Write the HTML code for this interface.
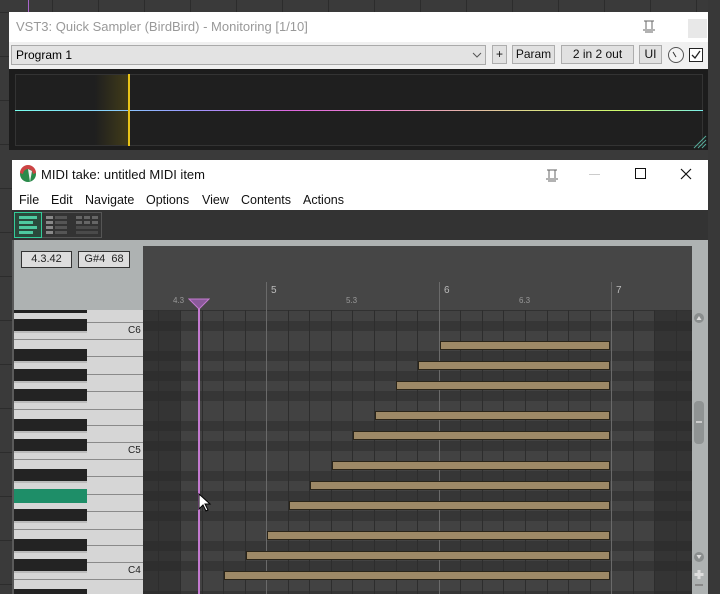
<!DOCTYPE html>
<html style="overflow:hidden"><head><style>
*{margin:0;padding:0;box-sizing:border-box}
html,body{width:720px;height:594px;overflow:hidden}
body{background:#3a3a3a;font-family:"Liberation Sans",sans-serif;position:relative}
.a{position:absolute}
.btn{position:absolute;top:45px;height:19px;background:#e1e1e1;border:1px solid #adadad;font-size:12px;text-align:center;line-height:17px;color:#111}
.t{font-size:12.5px;color:#111;position:absolute}
</style></head><body>
<div id="bg"></div>
<div class="a" style="left:9px;top:12px;width:699px;height:138px;background:#f0f0f0"></div>
<div class="a" style="left:9px;top:12px;width:699px;height:30px;background:#fff"></div>
<div class="t" style="left:16px;top:19px;color:#999;font-size:13px">VST3: Quick Sampler (BirdBird) - Monitoring [1/10]</div>
<svg class="a" style="left:641px;top:18px" width="16" height="16"><path d="M3 3h10M5 3v8M11 3v8M2 12h12M4 14h8" stroke="#666" fill="none"/></svg>
<div class="a" style="left:688px;top:19px;width:19px;height:19px;background:#e8e8e8"></div>
<div class="a" style="left:11px;top:45px;width:475px;height:20px;background:#e3e3e3;border:1px solid #aaa;font-size:12px;line-height:18px;padding-left:4px">Program 1</div>
<svg class="a" style="left:472px;top:51px" width="10" height="8"><path d="M1 2l4 4 4-4" stroke="#555" fill="none"/></svg>
<div class="btn" style="left:492px;width:15px">+</div>
<div class="btn" style="left:512px;width:43px">Param</div>
<div class="btn" style="left:561px;width:73px">2 in 2 out</div>
<div class="btn" style="left:639px;width:23px">UI</div>
<svg class="a" style="left:667px;top:45px" width="38" height="20"><circle cx="9" cy="10" r="7.5" stroke="#555" fill="#f4f4f4"/><path d="M6 7l3 5" stroke="#333"/><rect x="22.5" y="3.5" width="13" height="13" stroke="#222" fill="#fff"/><path d="M25 10l3 3 5-7" stroke="#222" fill="none" stroke-width="1.3"/></svg>
<div class="a" style="left:9px;top:69px;width:699px;height:81px;background:#1c1c1c"></div>
<div class="a" style="left:15px;top:74px;width:688px;height:72px;border:1px solid #333;background:#1f1f1f"></div>
<div class="a" style="left:95px;top:75px;width:34px;height:70px;background:linear-gradient(90deg,rgba(60,55,20,0),rgba(90,80,20,.6))"></div>
<div class="a" style="left:15px;top:110px;width:688px;height:1px;background:linear-gradient(90deg,#7fe,#8cf 15%,#99f 25%,#d6d 40%,#e8c 55%,#dd8 75%,#cf6 90%,#7ee)"></div>
<div class="a" style="left:128px;top:74px;width:2px;height:72px;background:#e8c318"></div>
<svg class="a" style="left:692px;top:132px" width="16" height="18"><path d="M2 16L14 4M6 16L14 8M10 16L14 12" stroke="#5a9"/></svg>
<div class="a" style="left:12px;top:160px;width:696px;height:434px;background:#aeb2b2"></div>
<div class="a" style="left:12px;top:160px;width:696px;height:50px;background:#fff"></div>
<svg class="a" style="left:19px;top:165px" width="18" height="18"><circle cx="9" cy="9" r="8" fill="#2a8a4a"/><path d="M1 8a8 8 0 0 1 16 0l-3 1a5 5 0 0 0-10 0z" fill="#c44"/><path d="M9 4l4 2-2 11z" fill="#eee"/></svg>
<div class="t" style="left:41px;top:167px;font-size:13px">MIDI take: untitled MIDI item</div>
<svg class="a" style="left:544px;top:167px" width="16" height="16"><path d="M3 3h10M5 3v8M11 3v8M2 12h12M4 14h8" stroke="#666" fill="none"/></svg>
<div class="a" style="left:589px;top:174px;width:11px;height:1px;background:#ccc"></div>
<div class="a" style="left:635px;top:168px;width:11px;height:11px;border:1px solid #111"></div>
<svg class="a" style="left:680px;top:168px" width="12" height="12"><path d="M1 1l10 10M11 1L1 11" stroke="#111" stroke-width="1.2"/></svg>
<div class="t" style="left:19px;top:193px">File</div><div class="t" style="left:51px;top:193px">Edit</div><div class="t" style="left:85px;top:193px">Navigate</div><div class="t" style="left:146px;top:193px">Options</div><div class="t" style="left:202px;top:193px">View</div><div class="t" style="left:241px;top:193px">Contents</div><div class="t" style="left:303px;top:193px">Actions</div>
<div class="a" style="left:12px;top:210px;width:696px;height:30px;background:#333"></div>
<div class="a" style="left:14px;top:212px;width:88px;height:26px;border:1px solid #555"></div>
<div class="a" style="left:14px;top:212px;width:28px;height:26px;border:1px solid #3c9;background:#2a4a3c"></div>
<svg class="a" style="left:18px;top:216px" width="84" height="20">
<g fill="#4ec9a0"><rect x="1" y="0" width="18" height="3"/><rect x="1" y="5" width="14" height="3"/><rect x="1" y="10" width="18" height="3"/><rect x="1" y="15" width="14" height="3"/></g>
<g fill="#888"><rect x="28" y="0" width="7" height="3"/><rect x="28" y="5" width="7" height="3"/><rect x="28" y="10" width="7" height="3"/><rect x="28" y="15" width="7" height="3"/></g>
<g fill="#555"><rect x="37" y="0" width="12" height="3"/><rect x="37" y="5" width="12" height="3"/><rect x="37" y="10" width="12" height="3"/><rect x="37" y="15" width="12" height="3"/></g>
<g fill="#666"><rect x="58" y="0" width="6" height="3"/><rect x="66" y="0" width="6" height="3"/><rect x="74" y="0" width="6" height="3"/><rect x="58" y="5" width="6" height="3"/><rect x="66" y="5" width="6" height="3"/><rect x="74" y="5" width="6" height="3"/></g>
<g fill="#4a4a4a"><rect x="58" y="10" width="22" height="3"/><rect x="58" y="15" width="22" height="3"/></g></svg>
<div class="a" style="left:21px;top:251px;width:51px;height:17px;border:1px solid #333;background:#ddd;font-size:11px;text-align:center;line-height:15px;color:#222">4.3.42</div>
<div class="a" style="left:78px;top:251px;width:52px;height:17px;border:1px solid #333;background:#ddd;font-size:11px;text-align:center;line-height:15px;color:#222">G#4&nbsp; 68</div>
<div class="a" style="left:143px;top:246px;width:549px;height:64px;background:#464646"></div>
<div id="roll"></div>
<div id="piano"></div>
<svg class="a" style="left:692px;top:310px" width="16" height="284"><circle cx="7" cy="8" r="5" fill="#8a8e8e"/><path d="M4.5 10h5l-2.5-4z" fill="#ddd"/><rect x="2" y="91" width="10" height="43" rx="4" fill="#8f9393"/><rect x="4" y="111" width="6" height="2" fill="#ccc"/><circle cx="7" cy="247" r="5" fill="#8a8e8e"/><path d="M4.5 245h5l-2.5 4z" fill="#ddd"/><path d="M7 260v9M2.5 264.5h9" stroke="#ddd" stroke-width="3"/><path d="M3 275h8" stroke="#888" stroke-width="2"/></svg>
<script>
var bg='';
for(var y=12;y<594;y+=44)bg+='<div class="a" style="left:0;top:'+y+'px;width:720px;height:1px;background:#2c2c2c"></div>';
for(var x=52;x<720;x+=46)bg+='<div class="a" style="left:'+x+'px;top:0;width:1px;height:12px;background:#2c2c2c"></div>';
bg+='<div class="a" style="left:28px;top:0;width:1px;height:12px;background:#a6c"></div><div class="a" style="left:708px;top:0;width:12px;height:594px;background:#383838"></div>';
document.getElementById('bg').innerHTML=bg;
var blk={1:1,3:1,6:1,8:1,10:1};
var h='<div class="a" style="left:143px;top:310px;width:549px;height:284px;background:#313131"></div>';
for(var p=86;p>=57;p--){var y=331-10*(p-84);if(y<310||y>594)continue;var b=blk[p%12];var hh=Math.min(10,594-y);
h+='<div class="a" style="left:180px;top:'+y+'px;width:475px;height:'+hh+'px;background:'+(b?'#363636':'#424242')+'"></div>';
h+='<div class="a" style="left:143px;top:'+y+'px;width:37px;height:'+hh+'px;background:'+(b?'#2e2e2e':'#343434')+'"></div>';
h+='<div class="a" style="left:655px;top:'+y+'px;width:37px;height:'+hh+'px;background:'+(b?'#2e2e2e':'#343434')+'"></div>';}
for(var i=-1;i<26;i++){var x=Math.round(180+21.56*i);if(x<143||x>=692)continue;h+='<div class="a" style="left:'+x+'px;top:310px;width:1px;height:284px;background:#2d2d2d"></div>';}
[266,439,611].forEach(function(x,i){h+='<div class="a" style="left:'+x+'px;top:282px;width:1px;height:312px;background:#6a6a6a"></div><div class="a" style="left:'+(x+5)+'px;top:285px;font-size:10px;color:#bbb">'+(5+i)+'</div>';});
[[173,'4.3'],[346,'5.3'],[519,'6.3']].forEach(function(a){h+='<div class="a" style="left:'+a[0]+'px;top:296px;font-size:8px;color:#999">'+a[1]+'</div>';});
[[341,440],[361,418],[381,396],[411,375],[431,353],[461,332],[481,310],[501,289],[531,267],[551,246],[571,224]].forEach(function(n){h+='<div class="a" style="left:'+n[1]+'px;top:'+n[0]+'px;width:'+(610-n[1])+'px;height:9px;background:#9e8966;border:1px solid #2a2418"></div>';});
h+='<div class="a" style="left:198px;top:300px;width:2px;height:294px;background:#c47ad0"></div><svg class="a" style="left:188px;top:298px" width="22" height="12"><path d="M1 1h20l-10 10z" fill="#8a5a9a" stroke="#c47ad0"/></svg>';
h+='<svg class="a" style="left:198px;top:493px" width="14" height="20"><path d="M1 1v15l4-4 3 6 2-1-3-6h5z" fill="#fff" stroke="#000"/></svg>';
document.getElementById('roll').innerHTML=h;
var k='<div class="a" style="left:12px;top:310px;width:131px;height:284px;background:#d6d6d6"></div><div class="a" style="left:12px;top:240px;width:2px;height:354px;background:#5a5a5a"></div>';
[322,339,356,374,391,409,425,442,459,476,494,511,529,545,562,579].forEach(function(y){var full=[339,409,459,529,579].indexOf(y)>=0;k+='<div class="a" style="left:'+(full?14:87)+'px;top:'+y+'px;width:'+(full?129:56)+'px;height:1px;background:#8a8a8a"></div>';});
k+='<div class="a" style="left:14px;top:310px;width:73px;height:3px;background:#222"></div>';
for(var p=86;p>=57;p--){if(!blk[p%12])continue;var y=331-10*(p-84)-2;if(y<305)continue;var hh=Math.min(14,594-y);k+='<div class="a" style="left:14px;top:'+y+'px;width:73px;height:'+hh+'px;background:'+(p==68?'#1e8e68':'#232323')+';border-bottom:'+(hh==14?2:0)+'px solid '+(p==68?'#1e8e68':'#bbb')+'"></div>';}
[[325,'C6'],[445,'C5'],[565,'C4']].forEach(function(a){k+='<div class="a" style="left:128px;top:'+a[0]+'px;font-size:10px;color:#222">'+a[1]+'</div>';});
document.getElementById('piano').innerHTML=k;
</script>
</body></html>
